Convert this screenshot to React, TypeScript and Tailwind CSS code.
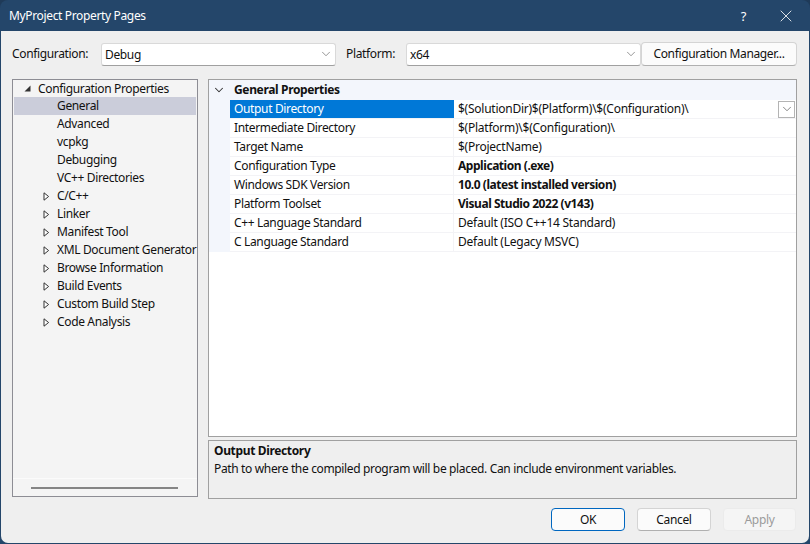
import { ChevronDown, X } from "lucide-react";

const treeChildren = ["General", "Advanced", "vcpkg", "Debugging", "VC++ Directories"];
const treeGroups = [
  "C/C++",
  "Linker",
  "Manifest Tool",
  "XML Document Generator",
  "Browse Information",
  "Build Events",
  "Custom Build Step",
  "Code Analysis",
];

const properties = [
  { name: "Intermediate Directory", value: "$(Platform)\\$(Configuration)\\", bold: false },
  { name: "Target Name", value: "$(ProjectName)", bold: false },
  { name: "Configuration Type", value: "Application (.exe)", bold: true },
  { name: "Windows SDK Version", value: "10.0 (latest installed version)", bold: true },
  { name: "Platform Toolset", value: "Visual Studio 2022 (v143)", bold: true },
  { name: "C++ Language Standard", value: "Default (ISO C++14 Standard)", bold: false },
  { name: "C Language Standard", value: "Default (Legacy MSVC)", bold: false },
];

function Combo({ value, width }: { value: string; width: string }) {
  return (
    <div className={`${width} h-[23px] flex items-center justify-between bg-white border border-[#d9d9d9] border-b-[#a0a0a0] rounded-[3px] pl-[3px] pr-[2px]`}>
      <span className="pt-[2px]">{value}</span>
      <ChevronDown className="w-[14px] h-[14px] text-[#6a6a6a]" strokeWidth={1.2} />
    </div>
  );
}

function Arrow() {
  return (
    <svg width="7" height="9" viewBox="0 0 7 9" className="shrink-0">
      <path d="M1 .8 L5.6 4.5 L1 8.2 Z" fill="#fff" stroke="#333" strokeWidth="1" />
    </svg>
  );
}

export default function App() {
  return (
    <div className="w-[810px] h-[544px] bg-[#1f3a58] overflow-hidden text-[12px] leading-[18px] text-[#111] font-['Noto_Sans','Open_Sans',sans-serif] tracking-[-0.35px]">
      <div className="h-full flex flex-col rounded-t-[8px] bg-[#24466a]">
        <div className="h-[31px] shrink-0 flex items-center justify-between pl-[9px] pr-[14px] text-white">
          <span>MyProject Property Pages</span>
          <div className="flex items-center gap-[30px]">
            <span className="text-[13px]">?</span>
            <X className="w-[20px] h-[20px]" strokeWidth={1} />
          </div>
        </div>

        <div className="flex-1 mx-px mb-px bg-[#efefef] rounded-b-[7px] pt-[11px] pl-[11px] pr-[12px] flex flex-col">
          <div className="h-[24px] flex items-center">
            <span className="w-[89px]">Configuration:</span>
            <Combo value="Debug" width="w-[235px]" />
            <span className="ml-[10px] w-[60px]">Platform:</span>
            <Combo value="x64" width="w-[235px]" />
            <div className="w-[156px] h-[24px] flex items-center justify-center bg-[#fbfbfb] border border-[#d4d4d4] border-b-[#b0b0b0] rounded-[4px]">
              Configuration Manager...
            </div>
          </div>

          <div className="mt-[13px] flex gap-[10px]">
            <div className="w-[186px] h-[418px] border border-[#8d8d94] bg-[#f4f4f4] flex flex-col">
              <div className="flex-1 px-px">
                <div className="h-[17px] flex items-center pl-[10px] gap-[7px]">
                  <svg width="7" height="7" viewBox="0 0 7 7" className="shrink-0">
                    <path d="M6.5 .5 V6.5 H.5 Z" fill="#333" />
                  </svg>
                  <span>Configuration Properties</span>
                </div>
                {treeChildren.map((item, i) => (
                  <div key={item} className={`h-[18px] flex items-center pl-[43px] ${i === 0 ? "bg-[#cbcdda]" : ""}`}>
                    {item}
                  </div>
                ))}
                {treeGroups.map((item) => (
                  <div key={item} className="h-[18px] flex items-center pl-[29px] gap-[7px] whitespace-nowrap">
                    <Arrow />
                    <span>{item}</span>
                  </div>
                ))}
              </div>
              <div className="h-[18px] border-t border-[#fbfbfb] flex items-center justify-center pr-[2px]">
                <div className="w-[147px] h-[2px] bg-[#858585]" />
              </div>
            </div>

            <div className="w-[590px] flex flex-col">
              <div className="h-[358px] border border-[#a0a0a0] bg-white">
                <div className="bg-[#f3f6fc] w-[21px] h-[172px] float-left flex justify-center pt-[3px] pr-[2px]">
                  <ChevronDown className="w-[14px] h-[14px] text-[#333]" strokeWidth={1.8} />
                </div>
                <div className="h-[20px] bg-[#f3f6fc] flex items-center pl-[4px] font-bold">General Properties</div>
                <div className="flex h-[19px] border-b border-[#f3f3f6]">
                  <div className="w-[224px] bg-[#0078d7] text-white pl-[4px] flex items-center">Output Directory</div>
                  <div className="flex-1 flex items-center justify-between pl-[4px] pr-px tracking-[-0.25px]">
                    <span>$(SolutionDir)$(Platform)\$(Configuration)\</span>
                    <div className="w-[17px] h-[17px] border border-[#b4b4b4] flex items-center justify-center">
                      <ChevronDown className="w-[14px] h-[14px] text-[#555]" strokeWidth={1.2} />
                    </div>
                  </div>
                </div>
                {properties.map((p) => (
                  <div key={p.name} className="flex h-[19px] border-b border-[#f3f3f6]">
                    <div className="w-[224px] pl-[4px] flex items-center border-r border-[#f3f3f6]">{p.name}</div>
                    <div className={`flex-1 pl-[4px] flex items-center ${p.bold ? "font-bold tracking-[-0.45px]" : "tracking-[-0.25px]"}`}>{p.value}</div>
                  </div>
                ))}
              </div>
              <div className="mt-[3px] h-[59px] border border-[#a0a0a0] px-[5px] pt-[1px]">
                <div className="font-bold">Output Directory</div>
                <div>Path to where the compiled program will be placed. Can include environment variables.</div>
              </div>
            </div>
          </div>

          <div className="mt-[9px] flex justify-end gap-[12px] pr-[1px]">
            <div className="w-[74px] h-[23px] flex items-center justify-center bg-[#fbfbfb] border border-[#0067c0] rounded-[4px]">OK</div>
            <div className="w-[74px] h-[23px] flex items-center justify-center bg-[#fbfbfb] border border-[#d4d4d4] border-b-[#b0b0b0] rounded-[4px]">Cancel</div>
            <div className="w-[73px] h-[23px] flex items-center justify-center bg-[#f5f5f5] border border-[#ebebeb] rounded-[4px] text-[#9b9b9b]">Apply</div>
          </div>
        </div>
      </div>
    </div>
  );
}
